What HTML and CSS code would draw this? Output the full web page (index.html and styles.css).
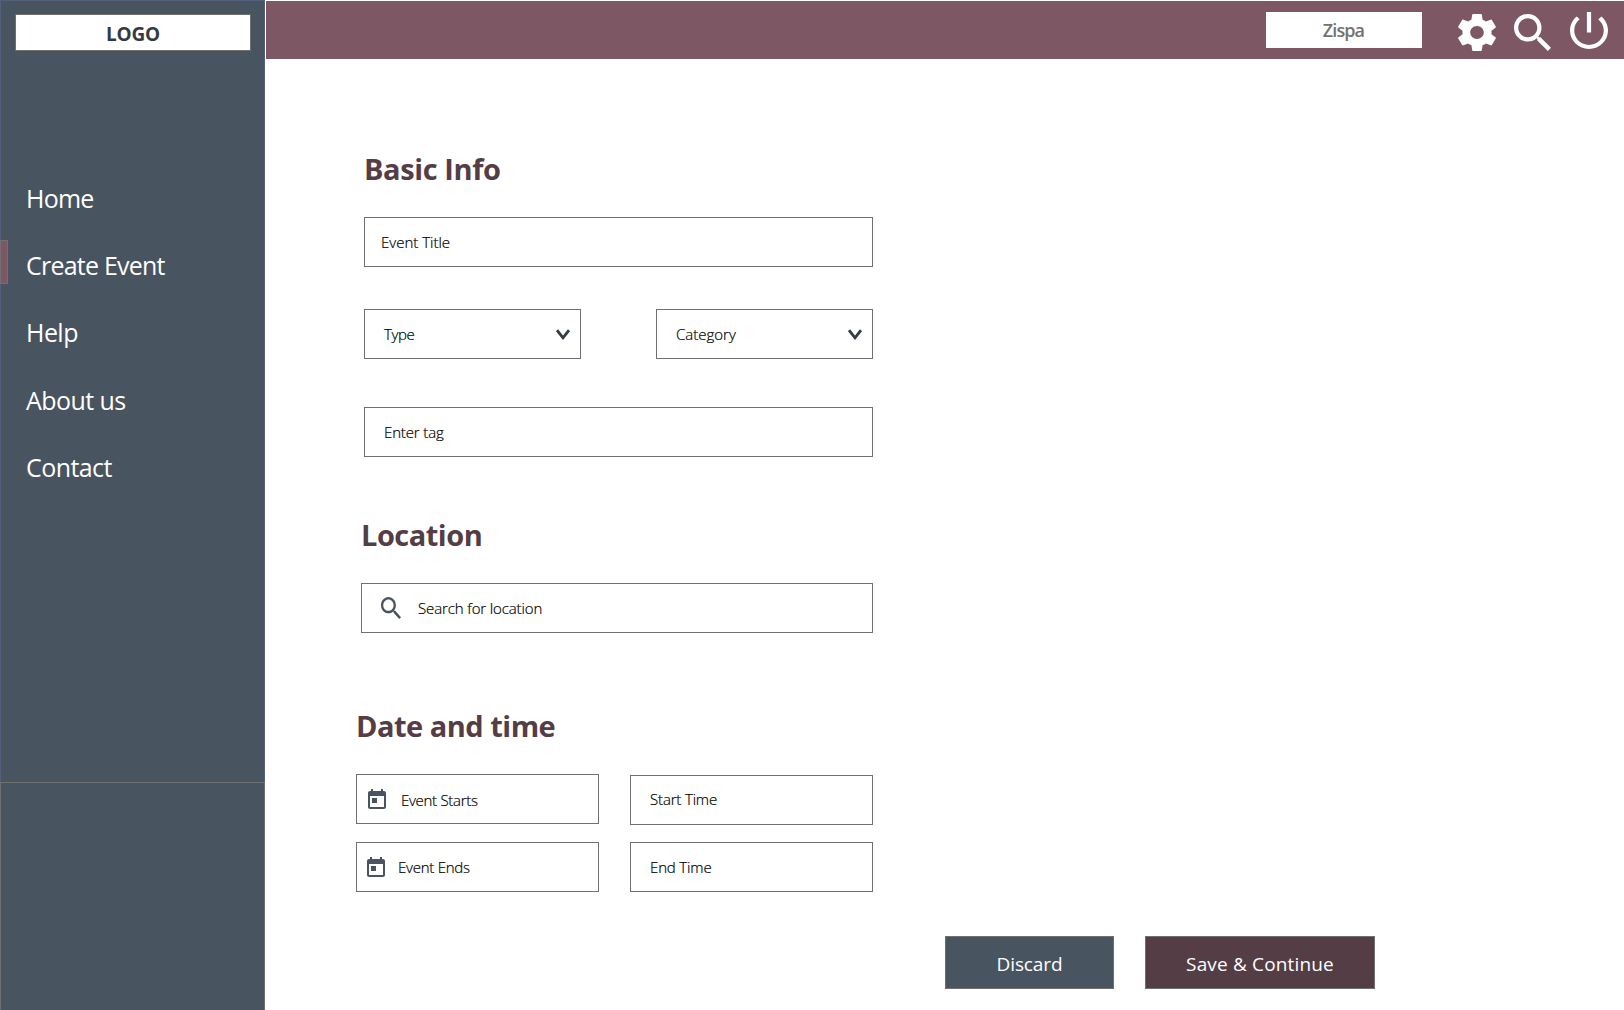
FILE: index.html
```html
<!DOCTYPE html>
<html lang="en">
<head>
<meta charset="utf-8">
<title>Create Event</title>
<link rel="stylesheet" href="styles.css">
</head>
<body>
<div class="app">
  <aside class="sidebar">
    <div class="sidebar-main">
      <div class="logo">LOGO</div>
      <nav class="nav">
        <a class="nav-item home">Home</a>
        <a class="nav-item create active">Create Event</a>
        <a class="nav-item help">Help</a>
        <a class="nav-item about">About us</a>
        <a class="nav-item contact">Contact</a>
      </nav>
    </div>
    <div class="sidebar-foot"></div>
  </aside>
  <div class="page">
    <header class="topbar">
      <div class="user"><span>Zispa</span></div>
      <svg class="icon-gear" viewBox="2.2 2 19.6 20" preserveAspectRatio="none"><path d="M19.43 12.98c.04-.32.07-.64.07-.98s-.03-.66-.07-.98l2.11-1.65c.19-.15.24-.42.12-.64l-2-3.46c-.12-.22-.39-.3-.61-.22l-2.49 1c-.52-.4-1.08-.73-1.69-.98l-.38-2.65C14.46 2.18 14.25 2 14 2h-4c-.25 0-.46.18-.49.42l-.38 2.65c-.61.25-1.17.59-1.69.98l-2.49-1c-.23-.09-.49 0-.61.22l-2 3.46c-.13.22-.07.49.12.64l2.11 1.65c-.04.32-.07.65-.07.98s.03.66.07.98l-2.11 1.65c-.19.15-.24.42-.12.64l2 3.46c.12.22.39.3.61.22l2.49-1c.52.4 1.08.73 1.69.98l.38 2.65c.03.24.24.42.49.42h4c.25 0 .46-.18.49-.42l.38-2.65c.61-.25 1.17-.59 1.69-.98l2.49 1c.23.09.49 0 .61-.22l2-3.46c.12-.22.07-.49-.12-.64l-2.11-1.65zM12 15.5c-1.93 0-3.5-1.57-3.5-3.5s1.570-3.500 3.500-3.500 3.500 1.570 3.500 3.500-1.570 3.500-3.500 3.500z"/></svg>
      <svg class="icon-search" viewBox="3 3 17.490 17.490"><path d="M15.500 14h-.790l-.280-.270C15.410 12.590 16 11.110 16 9.500 16 5.910 13.090 3 9.500 3S3 5.910 3 9.500 5.910 16 9.500 16c1.610 0 3.090-.590 4.230-1.570l.270.280v.790l5 4.990L20.490 19l-4.990-5zm-6 0C7.010 14 5 11.990 5 9.500S7.010 5 9.500 5 14 7.010 14 9.500 11.990 14 9.500 14z"/></svg>
      <svg class="icon-power" viewBox="3 3 18 18" preserveAspectRatio="none"><path d="M13 3h-2v10h2V3zm4.830 2.170l-1.420 1.420C17.990 7.860 19 9.810 19 12c0 3.870-3.130 7-7 7s-7-3.130-7-7c0-2.190 1.010-4.140 2.580-5.420L6.170 5.170C4.230 6.820 3 9.260 3 12c0 4.970 4.030 9 9 9s9-4.030 9-9c0-2.740-1.230-5.180-3.170-6.830z"/></svg>
    </header>
    <main class="form">
      <section class="basic">
        <h2>Basic Info</h2>
        <div class="field title"><span>Event Title</span></div>
        <div class="row selects">
          <div class="field select type"><span>Type</span><svg class="chevron" viewBox="0 0 14 11"><path d="M1 1.200L7 8.800L13 1.200"/></svg></div>
          <div class="field select category"><span>Category</span><svg class="chevron" viewBox="0 0 14 11"><path d="M1 1.200L7 8.800L13 1.200"/></svg></div>
        </div>
        <div class="field tag"><span>Enter tag</span></div>
      </section>
      <section class="location">
        <h2>Location</h2>
        <div class="field place">
          <svg class="icon-find" viewBox="3 3 17.490 17.490" preserveAspectRatio="none"><path d="M15.500 14h-.790l-.280-.270C15.410 12.590 16 11.110 16 9.500 16 5.910 13.090 3 9.500 3S3 5.910 3 9.500 5.910 16 9.500 16c1.610 0 3.090-.590 4.230-1.570l.270.280v.790l5 4.990L20.490 19l-4.990-5zm-6 0C7.010 14 5 11.990 5 9.500S7.010 5 9.500 5 14 7.010 14 9.500 11.990 14 9.500 14z"/></svg>
          <span>Search for location</span>
        </div>
      </section>
      <section class="schedule">
        <h2>Date and time</h2>
        <div class="row">
          <div class="field starts">
            <svg class="calendar" viewBox="3 1 18 20"><path d="M19 3h-1V1h-2v2H8V1H6v2H5c-1.110 0-1.990.900-1.990 2L3 19c0 1.100.890 2 2 2h14c1.100 0 2-.900 2-2V5c0-1.100-.900-2-2-2zm0 16H5V8h14v11zM7 10h5v5H7z"/></svg>
            <span>Event Starts</span>
          </div>
          <div class="field start-time"><span>Start Time</span></div>
        </div>
        <div class="row">
          <div class="field ends">
            <svg class="calendar" viewBox="3 1 18 20"><path d="M19 3h-1V1h-2v2H8V1H6v2H5c-1.110 0-1.990.900-1.990 2L3 19c0 1.100.890 2 2 2h14c1.100 0 2-.900 2-2V5c0-1.100-.900-2-2-2zm0 16H5V8h14v11zM7 10h5v5H7z"/></svg>
            <span>Event Ends</span>
          </div>
          <div class="field end-time"><span>End Time</span></div>
        </div>
      </section>
      <div class="actions">
        <button class="btn discard">Discard</button>
        <button class="btn save">Save &amp; Continue</button>
      </div>
    </main>
  </div>
</div>
</body>
</html>
```
FILE: styles.css
```css
*, *::before { box-sizing: border-box; }
body {
  margin: 0;
  background: #fff;
  font-family: "Open Sans", "Noto Sans", sans-serif;
}
svg { display: block; flex: none; }
.app { display: flex; width: 1624px; height: 1010px; overflow: hidden; }

/* Sidebar */
.sidebar { display: flex; flex-direction: column; width: 265px; flex: none; }
.sidebar-main {
  height: 782px;
  padding-top: 13px;
  background: #48545f;
  border: 1px solid #525f7d;
  border-bottom: 0;
}
.sidebar-foot { flex: 1; background: #48545f; border: 1px solid #707070; border-bottom: 0; }
.logo {
  width: 236px;
  height: 37px;
  margin-left: 14px;
  padding-top: 1px;
  background: #fff;
  border: 1px solid #707070;
  color: #343a42;
  font-size: 19px;
  font-weight: 700;
  letter-spacing: -0.2px;
  line-height: 37px;
  text-align: center;
}
.nav { display: flex; flex-direction: column; gap: 27px; margin: 127px 0 0 -1px; }
.nav-item {
  height: 40px;
  padding-left: 26px;
  color: #fff;
  font-size: 25px;
  line-height: 40px;
  letter-spacing: -0.57px;
}
.nav-item.active {
  display: flex;
  padding-left: 0;
  letter-spacing: -0.78px;
}
.nav-item.active::before {
  content: "";
  width: 8px;
  height: 44px;
  margin: -5px 18px 0 0;
  background: #7d5864;
  border: 1px solid #707070;
}
.home { letter-spacing: -0.75px; }
.help { letter-spacing: -0.55px; }
.about { margin-top: 1px; }

/* Top bar */
.page { flex: 1; min-width: 0; padding-left: 1px; }
.topbar {
  display: flex;
  align-items: flex-start;
  height: 58px;
  margin-top: 1px;
  padding-left: 1000px;
  background: #7d5864;
}
.topbar svg { fill: #fff; }
.user {
  width: 156px;
  height: 36px;
  padding-right: 1px;
  margin-top: 11px;
  background: #fff;
  color: #70736b;
  font-size: 18px;
  font-weight: 600;
  letter-spacing: -0.9px;
  line-height: 37px;
  text-align: center;
}
.icon-gear { width: 38px; height: 37px; margin: 13px 0 0 36px; }
.icon-search { width: 37px; height: 37px; margin: 13px 0 0 18px; }
.icon-power { width: 38px; height: 37px; margin: 11px 0 0 19px; }

/* Form */
.form { padding: 90px 0 0 98px; }
h2 {
  margin: 0 0 28px;
  color: #543d45;
  font-size: 29px;
  font-weight: 700;
  letter-spacing: -0.5px;
  line-height: 40px;
}
.basic h2 { letter-spacing: -0.4px; }
.row { display: flex; }
.field {
  display: flex;
  align-items: center;
  height: 50px;
  background: #fff;
  border: 1px solid #707070;
  color: #000;
  font-size: 15px;
  font-weight: 300;
  line-height: 24px;
  -webkit-text-stroke: 0.2px #000;
}
.title, .tag { width: 509px; }
.title { padding-left: 16px; }
.selects { gap: 75px; margin: 42px 0 48px; }
.select {
  width: 217px;
  justify-content: space-between;
  padding: 0 10.5px 0 19px;
}
.type span { letter-spacing: -0.39px; }
.chevron {
  width: 14px;
  height: 11px;
  margin-top: 1.5px;
  fill: none;
  stroke: #343c45;
  stroke-width: 2.8;
}
.tag { padding-left: 19px; letter-spacing: -0.14px; }
.location { margin: 58px 0 0 -3px; }
.place { width: 512px; padding-left: 19px; letter-spacing: -0.12px; }
.icon-find { width: 20px; height: 22px; margin: 0 17px 0 0; fill: #48545f; }
.schedule { margin: 73px 0 0 -8px; }
.schedule .row { height: 68px; gap: 31px; }
.schedule .field { width: 243px; }
.calendar { width: 18px; height: 20px; fill: #48545f; }
.starts { padding-left: 11px; letter-spacing: -0.29px; }
.starts span { margin: 2px 0 0 15px; }
.ends { padding-left: 10px; letter-spacing: -0.25px; }
.ends span { margin-left: 13px; }
.start-time { margin-top: 1px; padding-left: 19px; letter-spacing: -0.16px; }
.start-time span { margin-top: -2px; }
.end-time { padding-left: 19px; letter-spacing: -0.15px; }

.actions { display: flex; gap: 31px; margin: 26px 0 0 581px; }
.btn {
  height: 53px;
  padding: 2px 0 0;
  border: 1px solid #707070;
  color: #fff;
  font: 400 19px/40px "Open Sans", "Noto Sans", sans-serif;
}
.discard { width: 169px; background: #48545f; letter-spacing: -0.1px; }
.save { width: 230px; background: #543d45; letter-spacing: 0.16px; }
```
